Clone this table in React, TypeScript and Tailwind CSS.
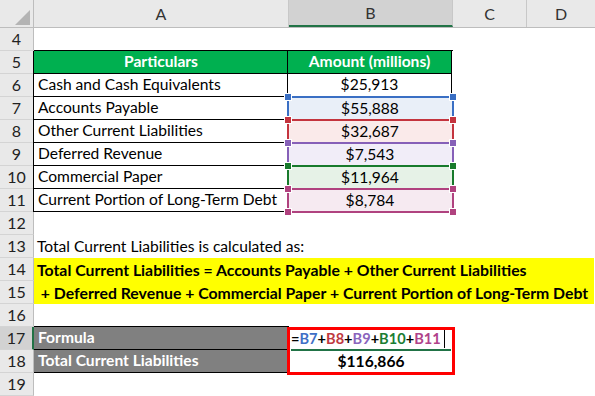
import React from "react";

type RefBox = { fill: string; border: string; handle: string };

const refs: Record<number, RefBox> = {
  7: { fill: "bg-[#e9eff8]", border: "border-[#3a6fc4]", handle: "bg-[#3a6fc4]" },
  8: { fill: "bg-[#faeaea]", border: "border-[#c4343e]", handle: "bg-[#c4343e]" },
  9: { fill: "bg-[#f1edf8]", border: "border-[#8660b8]", handle: "bg-[#8660b8]" },
  10: { fill: "bg-[#e6f2e7]", border: "border-[#187a2c]", handle: "bg-[#187a2c]" },
  11: { fill: "bg-[#f6eaf1]", border: "border-[#b0427f]", handle: "bg-[#b0427f]" },
};

const table: [number, string, string][] = [
  [6, "Cash and Cash Equivalents", "$25,913"],
  [7, "Accounts Payable", "$55,888"],
  [8, "Other Current Liabilities", "$32,687"],
  [9, "Deferred Revenue", "$7,543"],
  [10, "Commercial Paper", "$11,964"],
  [11, "Current Portion of Long-Term Debt", "$8,784"],
];

const RowHead = ({ n, active }: { n: number; active?: boolean }) => (
  <div
    className={`w-[34px] shrink-0 flex items-center justify-center border-b border-[#d4d4d4] text-[16px] text-[#222] ${
      active ? "bg-[#d2d2d2] border-r-2 border-r-[#217346]" : "bg-[#e9e9e9] border-r border-r-[#bdbdbd]"
    }`}
  >
    {n}
  </div>
);

const Handle = ({ cls, pos }: { cls: string; pos: string }) => (
  <span className={`absolute w-[6px] h-[6px] ${cls} ${pos} outline outline-1 outline-white`} />
);

const Row = ({ n, active, children }: { n: number; active?: boolean; children?: React.ReactNode }) => (
  <div className="flex h-[23px]">
    <RowHead n={n} active={active} />
    {children ?? <div className="flex-1" />}
  </div>
);

export default function App() {
  return (
    <div
      className="w-[595px] h-[396px] bg-white overflow-hidden text-black text-[15.6px]"
      style={{ fontFamily: "Lato, 'Open Sans', sans-serif" }}
    >
      {/* column headers */}
      <div className="flex h-[28px] bg-[#e9e9e9] border-b border-[#bdbdbd] text-[16px] text-[#333]">
        <div className="relative w-[34px] shrink-0 border-r border-[#bdbdbd]">
          <svg className="absolute left-[15px] top-[10px]" width="15" height="15" viewBox="0 0 15 15">
            <polygon points="15,0 15,15 0,15" fill="#b4b4b4" />
          </svg>
        </div>
        <div className="w-[255px] shrink-0 flex items-center justify-center border-r border-[#c8c8c8]">A</div>
        <div className="w-[164px] shrink-0 flex items-center justify-center bg-[#d2d2d2] border-r border-[#c8c8c8] border-b-2 border-b-[#217346]">
          B
        </div>
        <div className="w-[74px] shrink-0 flex items-center justify-center border-r border-[#c8c8c8]">C</div>
        <div className="flex-1 flex items-center justify-center">D</div>
      </div>

      <Row n={4}>
        <div className="w-[255px] shrink-0 border-b border-black" />
        <div className="w-[164px] shrink-0 border-b border-black" />
      </Row>

      <Row n={5}>
        <div className="w-[255px] shrink-0 -ml-px pl-px border-l border-black flex items-center justify-center bg-[#00b050] border-b border-r border-black text-white font-bold">
          Particulars
        </div>
        <div className="w-[164px] shrink-0 flex items-center justify-center bg-[#00b050] border-b border-r border-black text-white font-bold">
          Amount (millions)
        </div>
      </Row>

      {table.map(([n, label, amt]) => {
        const r = refs[n];
        return (
          <Row key={n} n={n}>
            <div className="w-[255px] shrink-0 -ml-px pl-[4px] border-l border-black flex items-center border-b border-r border-black whitespace-nowrap">
              {label}
            </div>
            <div
              className={`relative w-[164px] shrink-0 flex items-center justify-center ${
                r ? r.fill : "border-b border-r border-black"
              }`}
            >
              {r && (
                <>
                  <span className={`absolute -top-[1px] -left-[1px] -right-[2px] -bottom-[1px] border-2 ${r.border}`} />
                  <Handle cls={r.handle} pos="-top-[3px] -left-[3px]" />
                  <Handle cls={r.handle} pos="-top-[3px] -right-[4px]" />
                  <Handle cls={r.handle} pos="-bottom-[3px] -left-[3px]" />
                  <Handle cls={r.handle} pos="-bottom-[3px] -right-[4px]" />
                </>
              )}
              <span className="relative">{amt}</span>
            </div>
          </Row>
        );
      })}

      <Row n={12} />

      <Row n={13}>
        <div className="flex-1 flex items-center pl-[3px] whitespace-nowrap">
          Total Current Liabilities is calculated as:
        </div>
      </Row>

      <Row n={14}>
        <div className="flex-1 flex items-center pl-[3px] bg-[#ffff00] mr-[1px] font-bold text-[15.8px] whitespace-nowrap">
          Total Current Liabilities = Accounts Payable + Other Current Liabilities
        </div>
      </Row>

      <Row n={15}>
        <div className="flex-1 flex items-center pl-[3px] bg-[#ffff00] mr-[1px] font-bold text-[15.8px] whitespace-pre">
          {" + Deferred Revenue + Commercial Paper + Current Portion of Long-Term Debt"}
        </div>
      </Row>

      <Row n={16}>
        <div className="w-[255px] shrink-0 border-b border-black" />
      </Row>

      <Row n={17} active>
        <div className="w-[255px] shrink-0 flex items-center pl-[4px] bg-[#808080] border-b border-black text-white font-bold">
          Formula
        </div>
        <div className="relative w-[164px] shrink-0 flex items-center pl-[2px] font-bold text-[14.6px]">
          <span className="absolute top-0 -left-[2px] w-[168px] h-[48px] border-[3px] border-[#ff0000] z-10" />
          <span className="absolute left-[2px] right-[2px] -bottom-[1px] h-[2px] bg-[#217346]" />
          <span className="relative whitespace-nowrap">
            =<span className="text-[#3f6fc6]">B7</span>+<span className="text-[#c0393f]">B8</span>+
            <span className="text-[#8a64bd]">B9</span>+<span className="text-[#1b7d33]">B10</span>+
            <span className="text-[#b0428a]">B11</span>
          </span>
          <span className="ml-[3px] w-px h-[19px] shrink-0 bg-black" />
        </div>
      </Row>

      <Row n={18}>
        <div className="w-[255px] shrink-0 flex items-center pl-[4px] bg-[#808080] border-b border-black text-white font-bold">
          Total Current Liabilities
        </div>
        <div className="w-[164px] shrink-0 flex items-center justify-center font-bold">$116,866</div>
      </Row>

      <Row n={19} />
    </div>
  );
}
